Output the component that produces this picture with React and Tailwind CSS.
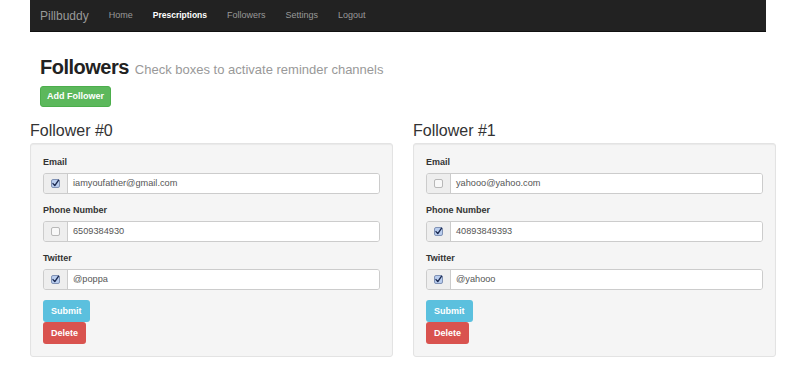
import React from "react";

const font = { fontFamily: '"Liberation Sans", Arial, sans-serif' };

function Check({ checked }) {
  return (
    <svg width="9" height="9" viewBox="0 0 9 9" className="block">
      <rect x="0.5" y="0.5" width="8" height="8" rx="1.5" fill={checked ? "#b9cdee" : "#f8f8f8"} stroke={checked ? "#6b7fa6" : "#a8a8a8"} strokeWidth="0.8" />
      {checked && (
        <path d="M2 4.6 L3.8 6.6 L7.6 1.2" fill="none" stroke="#1d2b52" strokeWidth="1.4" strokeLinecap="round" strokeLinejoin="round" />
      )}
    </svg>
  );
}

function Field({ label, value, checked }) {
  return (
    <div className="mb-[10px]">
      <div className="text-[9px] font-bold text-[#333] leading-[13px] mb-[4px]">{label}</div>
      <div className="flex h-[21px] w-[337px] rounded-[3px] border border-[#cccccc] overflow-hidden">
        <div className="w-[24px] bg-[#eeeeee] border-r border-[#cccccc] flex items-center justify-center">
          <Check checked={checked} />
        </div>
        <div className="flex-1 bg-white flex items-center pl-[5px] text-[9.2px] text-[#555]">{value}</div>
      </div>
    </div>
  );
}

function Card({ title, fields }) {
  return (
    <div className="w-[363px]">
      <div className="text-[16px] text-[#333] leading-[20px] mt-[14px] mb-[2px]">{title}</div>
      <div className="h-[214px] bg-[#f5f5f5] border border-[#e3e3e3] rounded-[3px] shadow-[inset_0_1px_1px_rgba(0,0,0,0.05)] pt-[12px] px-[12px]">
        {fields.map((f) => (
          <Field key={f.label} {...f} />
        ))}
        <div className="flex flex-col items-start">
          <button className="h-[22px] px-[8px] bg-[#5bc0de] text-white text-[9px] font-bold rounded-[3px]">Submit</button>
          <button className="h-[22px] px-[8px] bg-[#d9534f] text-white text-[9px] font-bold rounded-[3px]">Delete</button>
        </div>
      </div>
    </div>
  );
}

export default function App() {
  return (
    <div className="w-[800px] h-[366px] bg-white overflow-hidden" style={font}>
      <div className="ml-[30px] w-[736px] h-[32px] bg-[#222222] border-b border-[#111] flex items-center pl-[10px]">
        <span className="text-[12px] text-[#999] mr-[10px]">Pillbuddy</span>
        <span className="text-[9px] text-[#999] px-[10px]">Home</span>
        <span className="text-[8.5px] font-bold text-white px-[10px]">Prescriptions</span>
        <span className="text-[9px] text-[#999] px-[10px]">Followers</span>
        <span className="text-[9px] text-[#999] px-[10px]">Settings</span>
        <span className="text-[9px] text-[#999] px-[10px]">Logout</span>
      </div>
      <div className="pl-[40px] pt-[23px]">
        <div className="flex items-baseline gap-[6px] leading-[24px]">
          <span className="text-[20px] font-bold text-[#222] tracking-[-0.5px]">Followers</span>
          <span className="text-[13px] text-[#999]">Check boxes to activate reminder channels</span>
        </div>
        <button className="mt-[1px] h-[21px] px-[6px] bg-[#5cb85c] text-white text-[9px] font-bold rounded-[3px] border border-[#4cae4c]">Add Follower</button>
      </div>
      <div className="flex gap-[20px] pl-[30px]">
        <Card
          title="Follower #0"
          fields={[
            { label: "Email", value: "iamyoufather@gmail.com", checked: true },
            { label: "Phone Number", value: "6509384930", checked: false },
            { label: "Twitter", value: "@poppa", checked: true },
          ]}
        />
        <Card
          title="Follower #1"
          fields={[
            { label: "Email", value: "yahooo@yahoo.com", checked: false },
            { label: "Phone Number", value: "40893849393", checked: true },
            { label: "Twitter", value: "@yahooo", checked: true },
          ]}
        />
      </div>
    </div>
  );
}
